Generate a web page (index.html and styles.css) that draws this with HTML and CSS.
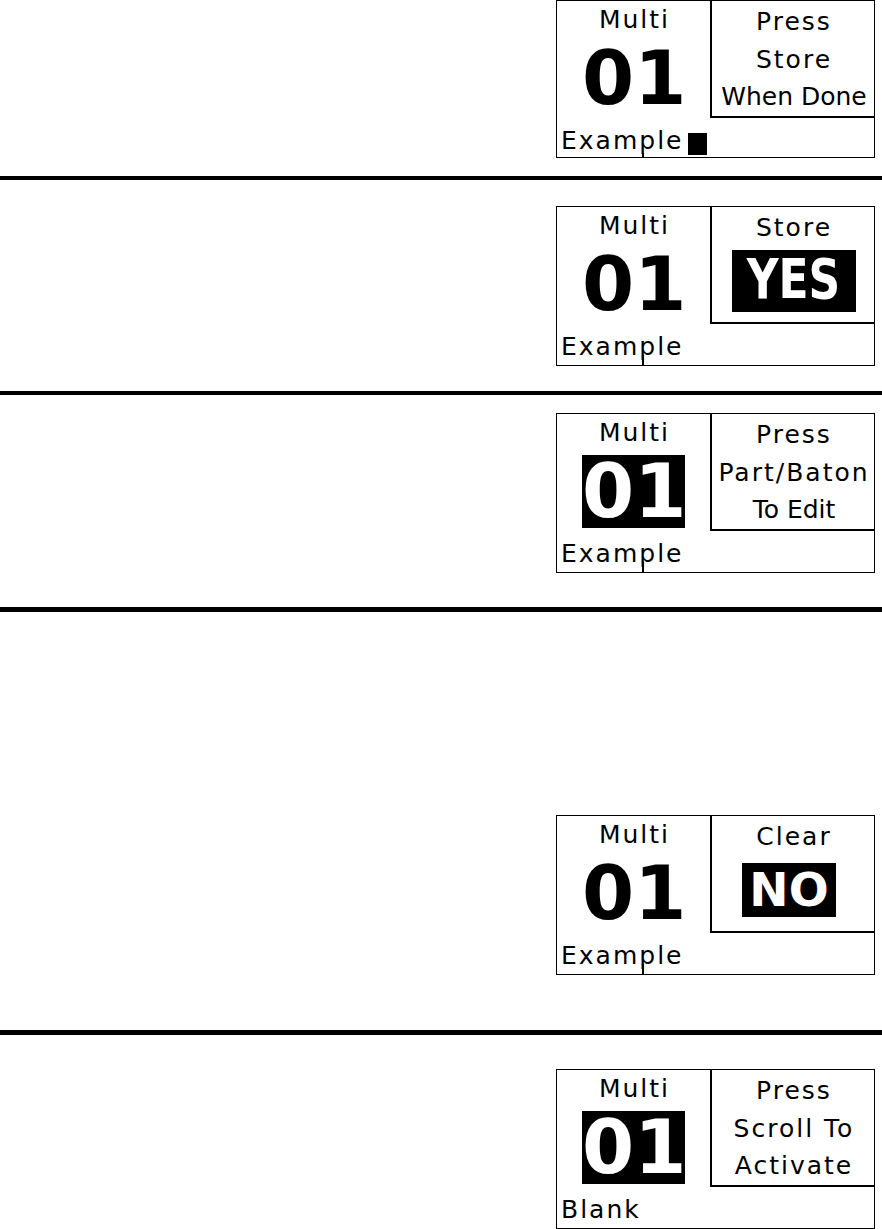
FILE: index.html
```html
<!DOCTYPE html>
<html lang="en">
<head>
<meta charset="utf-8">
<title>Multi screens</title>
<link rel="stylesheet" href="styles.css">
</head>
<body>
<section class="row s1">
  <div class="lcd short">
    <div class="left">
      <div class="title">Multi</div>
      <div class="num"><span>01</span></div>
      <div class="name">Example<span class="cursor"></span></div>
    </div>
    <div class="msg">
      <div class="line">Press</div>
      <div class="line">Store</div>
      <div class="line tight">When Done</div>
    </div>
    <span class="tick tick-short"></span>
  </div>
</section>

<section class="row s2">
  <div class="lcd">
    <div class="left">
      <div class="title">Multi</div>
      <div class="num"><span>01</span></div>
      <div class="name">Example</div>
    </div>
    <div class="msg">
      <div class="line">Store</div>
      <div class="yes"><span>YES</span></div>
    </div>
    <span class="tick"></span>
  </div>
</section>

<section class="row s3">
  <div class="lcd">
    <div class="left">
      <div class="title">Multi</div>
      <div class="num inv"><span>01</span></div>
      <div class="name">Example</div>
    </div>
    <div class="msg">
      <div class="line">Press</div>
      <div class="line">Part/Baton</div>
      <div class="line tight">To Edit</div>
    </div>
    <span class="tick"></span>
  </div>
</section>

<section class="row s4">
  <div class="lcd">
    <div class="left">
      <div class="title">Multi</div>
      <div class="num"><span>01</span></div>
      <div class="name">Example</div>
    </div>
    <div class="msg">
      <div class="line">Clear</div>
      <div class="no"><span>NO</span></div>
    </div>
    <span class="tick"></span>
  </div>
</section>

<section class="row s5">
  <div class="lcd">
    <div class="left">
      <div class="title">Multi</div>
      <div class="num inv"><span>01</span></div>
      <div class="name">Blank</div>
    </div>
    <div class="msg">
      <div class="line">Press</div>
      <div class="line">Scroll To</div>
      <div class="line">Activate</div>
    </div>
  </div>
</section>
</body>
</html>
```

FILE: styles.css
```css
html, body {
  margin: 0;
  padding: 0;
  background: #fff;
}

body {
  overflow: hidden;
  color: #000;
}

.row {
  display: flex;
  justify-content: flex-end;
  padding-right: 7px;
  border-bottom: 4px solid #000;
}

.s1 { padding-top: 0; padding-bottom: 18px; }
.s2 { padding-top: 26px; padding-bottom: 25px; }
.s3 { padding-top: 18px; padding-bottom: 34px; border-bottom-width: 5px; }
.s4 { padding-top: 203px; padding-bottom: 55px; border-bottom-width: 5px; }
.s5 { padding-top: 34px; padding-bottom: 0; border-bottom: none; }

.lcd {
  position: relative;
  box-sizing: border-box;
  width: 319px;
  height: 160px;
  border: 1px solid #000;
  display: grid;
  grid-template-columns: 153px 1fr;
  align-items: start;
  font-family: "DejaVu Sans", sans-serif;
  font-size: 25px;
  letter-spacing: 2px;
  color: #000;
}

.lcd.short {
  height: 158px;
}

.left {
  display: flex;
  flex-direction: column;
}

.title {
  line-height: 37.5px;
  text-align: center;
  padding-left: 2px;
}

.num {
  margin: 3px auto 0;
  width: 103px;
  height: 73px;
  font-weight: bold;
  font-size: 75px;
  line-height: 73px;
  letter-spacing: 0;
  text-align: center;
  white-space: nowrap;
}

.num.inv {
  background: #000;
  color: #fff;
}

.name {
  margin-top: 11px;
  padding-left: 4px;
  line-height: 30px;
  white-space: nowrap;
}

.cursor {
  display: inline-block;
  width: 19px;
  height: 22px;
  margin-left: 5px;
  background: #000;
  vertical-align: -6px;
}

.msg {
  box-sizing: border-box;
  height: 117px;
  border-left: 2px solid #000;
  border-bottom: 2px solid #000;
  padding-top: 2px;
  text-align: center;
}

.line {
  line-height: 37.5px;
  white-space: nowrap;
  padding-left: 2px;
}

.line.tight {
  letter-spacing: 0;
}

.yes {
  width: 124px;
  height: 62px;
  box-sizing: border-box;
  margin: 3.5px 0 0 20px;
  padding-bottom: 4px;
  background: #000;
  color: #fff;
  font-weight: bold;
  font-size: 55px;
  line-height: 58px;
  letter-spacing: 0;
  text-align: center;
}

.yes span {
  display: inline-block;
  transform: scaleX(0.8);
}

.no {
  width: 94px;
  height: 54px;
  margin: 7.5px 0 0 30px;
  background: #000;
  color: #fff;
  font-weight: bold;
  font-size: 47px;
  line-height: 54px;
  letter-spacing: 0;
  text-align: center;
}

.tick {
  position: absolute;
  left: 85px;
  bottom: 0;
  width: 2px;
  height: 10px;
  background: #000;
}

.tick-short {
  height: 4px;
}
```
